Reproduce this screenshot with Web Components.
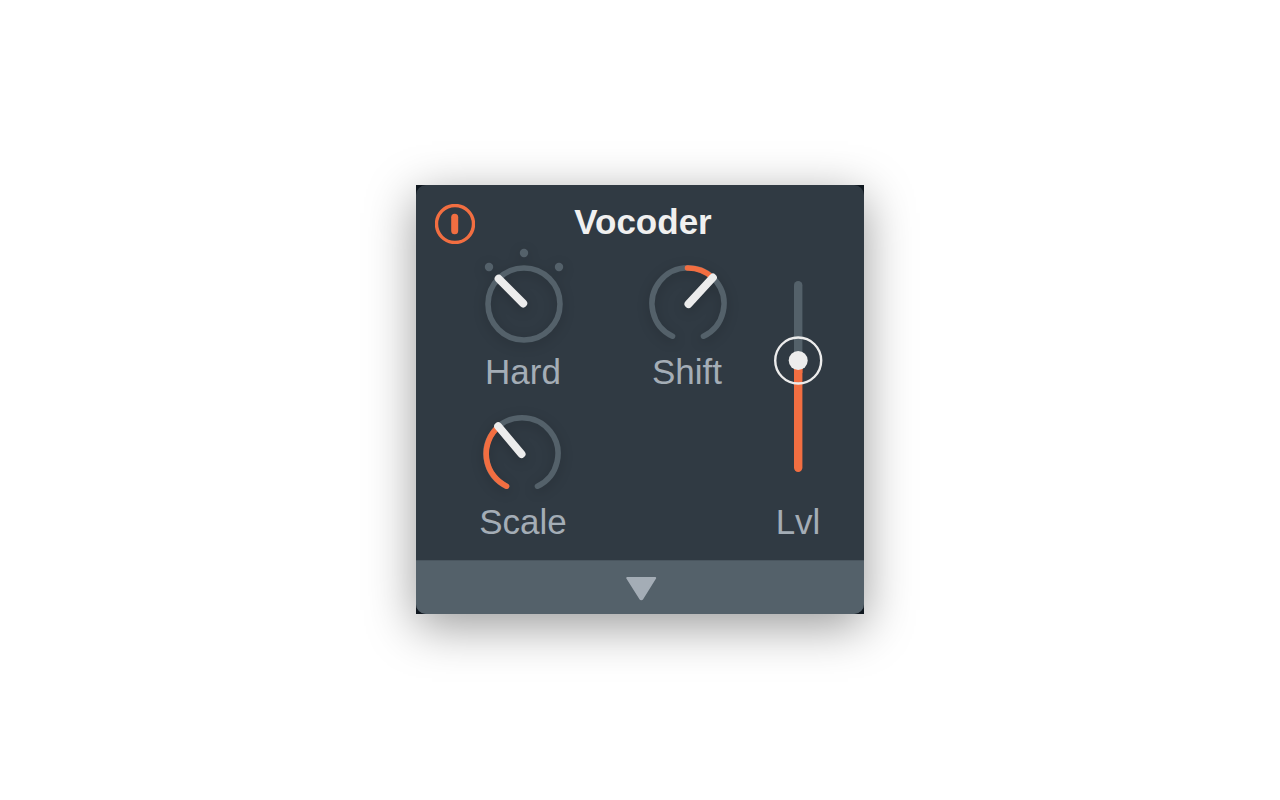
<!DOCTYPE html>
<html lang="en">
<head>
<meta charset="utf-8">
<title>Vocoder</title>
<style>
  body {
    margin: 0;
    box-sizing: border-box;
    min-height: 100vh;
    padding-bottom: 1px;
    display: grid;
    place-items: center;
    background: #fff;
    font-family: "Liberation Sans", Arial, Helvetica, sans-serif;
    --panel: #303a43;
    --track: #54616a;
    --accent: #f26e41;
    --light: #ececec;
    --label: #a4adb6;
  }
</style>
</head>
<body>
<device-panel heading="Vocoder">
  <dial-knob label="Hard" kind="switch" min="0" max="2" value="0"></dial-knob>
  <dial-knob label="Shift" kind="bipolar" min="-100" max="100" value="28"></dial-knob>
  <level-fader slot="level" label="Lvl" min="0" max="100" value="58"></level-fader>
  <dial-knob label="Scale" kind="unipolar" min="0" max="100" value="37"></dial-knob>
</device-panel>

<script>
class PowerButton extends HTMLElement {
  constructor() {
    super();
    this.attachShadow({ mode: "open" }).innerHTML = `
      <style>
        :host { display: block; width: 40px; height: 40px; }
        button { display: block; width: 100%; height: 100%; padding: 0; border: 0; background: none; cursor: pointer; }
        svg { display: block; stroke: var(--accent); fill: none; }
      </style>
      <button type="button" aria-label="Power" aria-pressed="true">
        <svg width="40" height="40" viewBox="0 0 40 40" aria-hidden="true">
          <circle cx="20" cy="20" r="18.5" stroke-width="3.4"/>
          <path d="M19.7 13.2V26.8" stroke-width="7" stroke-linecap="round"/>
        </svg>
      </button>`;
  }
}
customElements.define("power-button", PowerButton);

class DialKnob extends HTMLElement {
  connectedCallback() {
    const kinds = {
      switch: {
        box: "-49 -56 96 96",
        art: `
        <g fill="var(--track)">
          <circle cx="-35" cy="-37" r="4.2"/><circle cx="0" cy="-51" r="4.2"/><circle cx="35" cy="-37" r="4.2"/>
        </g>
        <circle class="ring" r="36"/>
        <path class="hand" d="M-0.8 -0.6L-25.3 -25.3"/>`
      },
      bipolar: {
        box: "-49 -56 96 96",
        art: `
        <path class="ring" d="M-15.5 32.2A36 36 0 1 1 15.5 32.2"/>
        <path class="ring on" stroke-linecap="round" d="M-0.5 -36A36 36 0 0 1 24.5 -26.4"/>
        <path class="hand" d="M0.5 0L24.8 -26.4"/>`
      },
      unipolar: {
        box: "-47 -56 96 96",
        art: `
        <path class="ring" d="M-15.5 32.2A36 36 0 1 1 15.5 32.2"/>
        <path class="ring on" d="M-15.5 32.2A36 36 0 0 1 -23.5 -27.3"/>
        <path class="hand" d="M-0.5 0L-23.8 -27.7"/>`
      }
    };
    const kind = kinds[this.getAttribute("kind")];
    const root = this.shadowRoot || this.attachShadow({ mode: "open" });
    root.innerHTML = `
      <style>
        :host { display: grid; justify-items: center; row-gap: 8px; }
        .dial { display: grid; width: 96px; height: 96px; }
        .dial > * { grid-area: 1 / 1; }
        svg { display: block; overflow: visible; }
        .ring { fill: none; stroke: var(--track); stroke-width: 5.6; stroke-linecap: round; }
        .on { stroke: var(--accent); }
        .hand { fill: none; stroke: var(--light); stroke-width: 8; stroke-linecap: round; }
        .soft { filter: drop-shadow(0 3px 6px rgba(0, 0, 0, .18)); }
        input { width: 100%; height: 100%; margin: 0; opacity: 0; cursor: pointer; }
        label { font-size: 35px; line-height: 40px; color: var(--label); }
      </style>
      <div class="dial">
        <svg width="96" height="96" viewBox="${kind.box}" aria-hidden="true"><g class="soft">${kind.art}</g></svg>
        <input id="value" type="range" min="${this.getAttribute("min")}" max="${this.getAttribute("max")}" value="${this.getAttribute("value")}">
      </div>
      <label for="value">${this.getAttribute("label")}</label>`;
  }
}
customElements.define("dial-knob", DialKnob);

class LevelFader extends HTMLElement {
  connectedCallback() {
    const root = this.shadowRoot || this.attachShadow({ mode: "open" });
    root.innerHTML = `
      <style>
        :host { display: grid; grid-template-rows: 1fr auto; justify-items: center; row-gap: 8px; }
        .fader { display: grid; width: 56px; height: 246px; }
        .fader > * { grid-area: 1 / 1; }
        svg { display: block; }
        input { width: 100%; height: 100%; margin: 0; opacity: 0; cursor: pointer; writing-mode: vertical-lr; direction: rtl; }
        label { font-size: 35px; line-height: 40px; color: var(--label); }
      </style>
      <div class="fader">
        <svg width="56" height="246" viewBox="0 0 56 246" aria-hidden="true">
          <path d="M28.2 37.3V112" stroke="var(--track)" stroke-width="8.4" stroke-linecap="round"/>
          <path d="M28.2 219.8V120" stroke="var(--accent)" stroke-width="8.4" stroke-linecap="round"/>
          <path d="M28.2 112V125" stroke="var(--accent)" stroke-width="8.4"/>
          <circle cx="28.2" cy="112.5" r="23" fill="none" stroke="var(--light)" stroke-width="2.4"/>
          <circle cx="28.2" cy="112.5" r="9.5" fill="var(--light)"/>
        </svg>
        <input id="value" type="range" min="${this.getAttribute("min")}" max="${this.getAttribute("max")}" value="${this.getAttribute("value")}">
      </div>
      <label for="value">${this.getAttribute("label")}</label>`;
  }
}
customElements.define("level-fader", LevelFader);

class DevicePanel extends HTMLElement {
  connectedCallback() {
    const root = this.shadowRoot || this.attachShadow({ mode: "open" });
    root.innerHTML = `
      <style>
        :host {
          display: block;
          width: 100%;
          max-width: 448px;
          background: #101820;
          box-shadow: 0 12px 46px rgba(0, 0, 0, .4);
        }
        section { border-radius: 10px; overflow: hidden; background: var(--panel); }
        header {
          display: grid;
          grid-template-columns: 40px 1fr 40px;
          align-items: start;
          padding: 19px 13px 4px 19px;
        }
        h1 { margin: 0; text-align: center; font-size: 35px; line-height: 36px; font-weight: 700; color: #f0f0f0; }
        .controls {
          display: grid;
          grid-template-columns: 164fr 164fr 58fr;
          padding: 0 37px 18px 25px;
        }
        .knobs { grid-column: 1 / 3; display: grid; grid-template-columns: 1fr 1fr; row-gap: 6px; }
        .more {
          display: grid;
          place-items: center;
          width: 100%;
          height: 54px;
          padding: 0;
          border: 0;
          border-top: 1px solid #4a565f;
          background: var(--track);
          cursor: pointer;
        }
        svg { display: block; }
      </style>
      <section>
        <header><power-button></power-button><h1>${this.getAttribute("heading")}</h1></header>
        <div class="controls">
          <div class="knobs"><slot></slot></div>
          <slot name="level"></slot>
        </div>
        <button class="more" type="button" aria-label="Show more">
          <svg width="34" height="26" viewBox="0 0 34 26" aria-hidden="true">
            <path d="M4.2 3H32.2L19.6 23.3Q18.3 25 17 23.3Z" fill="#a4adb6" stroke="#a4adb6" stroke-width="2" stroke-linejoin="round"/>
          </svg>
        </button>
      </section>`;
  }
}
customElements.define("device-panel", DevicePanel);
</script>
</body>
</html>
